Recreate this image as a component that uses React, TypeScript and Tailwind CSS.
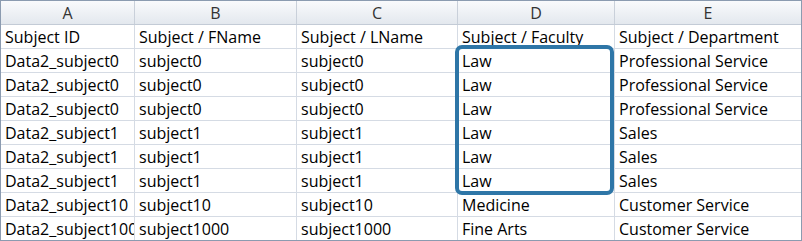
const columns = ['A', 'B', 'C', 'D', 'E']
const widths = ['w-[134px]', 'w-[162px]', 'w-[161px]', 'w-[157px]', 'w-[186px]']

const rows: string[][] = [
  ['Subject ID', 'Subject / FName', 'Subject / LName', 'Subject / Faculty', 'Subject / Department'],
  ['Data2_subject0', 'subject0', 'subject0', 'Law', 'Professional Service'],
  ['Data2_subject0', 'subject0', 'subject0', 'Law', 'Professional Service'],
  ['Data2_subject0', 'subject0', 'subject0', 'Law', 'Professional Service'],
  ['Data2_subject1', 'subject1', 'subject1', 'Law', 'Sales'],
  ['Data2_subject1', 'subject1', 'subject1', 'Law', 'Sales'],
  ['Data2_subject1', 'subject1', 'subject1', 'Law', 'Sales'],
  ['Data2_subject10', 'subject10', 'subject10', 'Medicine', 'Customer Service'],
  ['Data2_subject1000', 'subject1000', 'subject1000', 'Fine Arts', 'Customer Service'],
]

export default function App() {
  return (
    <div className="relative w-[802px] h-[241px] border border-[#8b9bb0] bg-white font-['Open_Sans',sans-serif] text-[16px] leading-none text-black">
      {/* column letters */}
      <div className="flex h-[24px] border-b border-[#c3cbd6] bg-gradient-to-b from-[#f9fafc] to-[#e3e8ee]">
        {columns.map((c, i) => (
          <div
            key={c}
            className={`${widths[i]} flex items-center justify-center text-[#333] ${i < 4 ? 'border-r border-[#c9d0da]' : ''}`}
          >
            {c}
          </div>
        ))}
      </div>

      {rows.map((row, r) => (
        <div key={r} className={`flex ${r < rows.length - 1 ? 'h-[24px] border-b border-[#d5dbe4]' : 'h-[23px]'}`}>
          {row.map((cell, i) => (
            <div
              key={i}
              className={`${widths[i]} flex items-center overflow-hidden whitespace-nowrap pl-[4px] ${i < 4 ? 'border-r border-[#d5dbe4]' : ''}`}
            >
              {cell}
            </div>
          ))}
        </div>
      ))}

      {/* highlight around the Law cells */}
      <div className="absolute left-[454px] top-[44px] w-[159px] h-[150px] rounded-[7px] border-4 border-[#2e76a7]" />
    </div>
  )
}
